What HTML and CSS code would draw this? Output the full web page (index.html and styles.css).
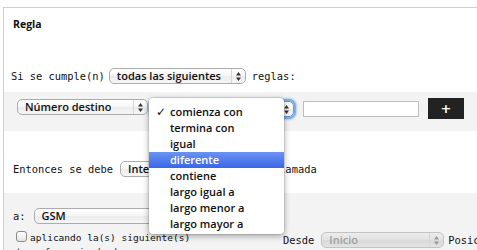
FILE: index.html
```html
<!DOCTYPE html>
<html>
<head>
<meta charset="utf-8">
<link rel="stylesheet" href="styles.css">
</head>
<body>
<div class="panel">
  <div class="title">Regla</div>

  <div class="row cond-row">
    <span class="mono">Si se cumple(n)</span>
    <div class="sel sel-todas"><span class="txt">todas las siguientes</span><span class="arr"><svg width="5" height="9" viewBox="0 0 5 9"><path d="M2.5 0L5 3.5H0Z M2.5 9L5 5.5H0Z" fill="#333"/></svg></span></div>
    <span class="mono">reglas:</span>
  </div>

  <div class="band rule-row">
    <div class="sel sel-campo"><span class="txt">Número destino</span><span class="arr"><svg width="5" height="9" viewBox="0 0 5 9"><path d="M2.5 0L5 3.5H0Z M2.5 9L5 5.5H0Z" fill="#333"/></svg></span></div>
    <div class="sel sel-op focus"><span class="txt">comienza con</span><span class="arr"><svg width="5" height="9" viewBox="0 0 5 9"><path d="M2.5 0L5 3.5H0Z M2.5 9L5 5.5H0Z" fill="#333"/></svg></span></div>
    <input class="valor" type="text">
    <button class="add">+</button>
  </div>

  <div class="row action-row">
    <span class="mono">Entonces se debe</span>
    <div class="sel sel-accion"><span class="txt">Interceptar</span><span class="arr"><svg width="5" height="9" viewBox="0 0 5 9"><path d="M2.5 0L5 3.5H0Z M2.5 9L5 5.5H0Z" fill="#333"/></svg></span></div>
    <span class="mono">la llamada</span>
  </div>

  <div class="band target">
    <div class="row a-row">
      <span class="mono">a:</span>
      <div class="sel sel-gsm"><span class="txt">GSM</span><span class="arr"><svg width="5" height="9" viewBox="0 0 5 9"><path d="M2.5 0L5 3.5H0Z M2.5 9L5 5.5H0Z" fill="#333"/></svg></span></div>
    </div>
    <div class="trans-row">
      <div class="trans-left mono"><span class="chk"></span>aplicando la(s) siguiente(s) transformacion(es):</div>
      <div class="trans-right">
        <span class="mono">Desde</span>
        <div class="sel sel-inicio disabled"><span class="txt">Inicio</span><span class="arr"><svg width="5" height="9" viewBox="0 0 5 9"><path d="M2.5 0L5 3.5H0Z M2.5 9L5 5.5H0Z" fill="#999"/></svg></span></div>
        <span class="mono">Posición</span>
      </div>
    </div>
  </div>

  <ul class="menu">
    <li class="checked"><span class="check">✓</span>comienza con</li>
    <li>termina con</li>
    <li>igual</li>
    <li class="hl">diferente</li>
    <li>contiene</li>
    <li>largo igual a</li>
    <li>largo menor a</li>
    <li>largo mayor a</li>
  </ul>
</div>
</body>
</html>
```

FILE: styles.css
```css
html, body {
  margin: 0;
  padding: 0;
  background: #fff;
  overflow: hidden;
}
body {
  width: 477px;
  height: 250px;
}
.panel {
  position: relative;
  margin: 7px 0 0 3px;
  border-top: 1px solid #cfcfcf;
  border-left: 1px solid #cfcfcf;
  width: 520px;
  height: 300px;
  font-family: "Open Sans", "DejaVu Sans", sans-serif;
  color: #111;
}
.title {
  padding: 8px 0 0 9px;
  height: 16px;
  line-height: 16px;
  font-weight: 700;
  font-size: 10.5px;
}
.mono {
  font-family: "DejaVu Sans Mono", monospace;
  font-size: 10.4px;
  color: #111;
  white-space: nowrap;
}
.row {
  display: flex;
  align-items: center;
}
.cond-row {
  margin-top: 36px;
  height: 16px;
  padding-left: 7px;
  margin-bottom: 8px;
}
.band {
  background: #f3f3f3;
}
.rule-row {
  height: 39px;
  box-sizing: border-box;
  padding: 6px 0 0 13px;
  display: flex;
  align-items: flex-start;
}
.sel {
  display: flex;
  align-items: center;
  box-sizing: border-box;
  height: 16px;
  border: 1px solid #ababab;
  border-radius: 5px;
  background: linear-gradient(#ffffff, #f7f7f7 45%, #ececec 55%, #f6f6f6);
  padding-left: 7px;
  font-size: 11px;
  font-weight: 600;
  color: #111;
}
.sel .txt {
  white-space: nowrap;
  overflow: hidden;
  line-height: 14px;
}
.sel .arr {
  margin-left: auto;
  width: 13px;
  height: 100%;
  border-left: 1px solid #d6d6d6;
  display: flex;
  align-items: center;
  justify-content: center;
  flex: none;
}
.sel-todas {
  width: 137px;
  margin: 0 6px 0 4px;
}
.sel-campo {
  width: 131px;
  margin-top: 1px;
}
.sel-op {
  width: 143px;
  margin: 3px 0 0 3px;
}
.focus {
  box-shadow: 0 0 0 2px #82ace4, 0 0 2px 3px #b3cdf0;
  border-color: #6d95cf;
}
.valor {
  margin: 3px 0 0 9px;
  width: 116px;
  height: 16px;
  box-sizing: border-box;
  border: 1px solid #bdbdbd;
  background: #fff;
  padding: 0;
}
.add {
  margin: 0 0 0 9px;
  width: 36px;
  height: 21px;
  border: none;
  background: #222;
  color: #fff;
  font: 700 13px "DejaVu Sans", sans-serif;
  padding: 0;
  line-height: 21px;
}
.action-row {
  margin-top: 30px;
  height: 15px;
  padding-left: 9px;
  margin-bottom: 17px;
}
.sel-accion {
  width: 130px;
  margin: 0 4px 0 7px;
}
.target {
  padding-top: 15px;
  height: 80px;
}
.a-row {
  height: 15px;
  padding-left: 9px;
}
.sel-gsm {
  width: 150px;
  margin-left: 8px;
}
.trans-row {
  display: flex;
  align-items: flex-start;
  margin-top: 8px;
}
.trans-left {
  width: 262px;
  padding-left: 12px;
  white-space: normal;
  line-height: 14px;
  font-size: 9.5px;
}
.chk {
  display: inline-block;
  width: 9px;
  height: 9px;
  border: 1px solid #8a8a8a;
  border-radius: 3px;
  background: linear-gradient(#fdfdfd, #e6e6e6);
  vertical-align: -1px;
  margin-right: 3px;
}
.trans-right {
  display: flex;
  align-items: center;
  margin: 1px 0 0 5px;
}
.sel-inicio {
  width: 123px;
  margin: 0 4px 0 7px;
}
.disabled {
  background: linear-gradient(#ececec, #e2e2e2 50%, #d9d9d9 55%, #e3e3e3);
  border-color: #c3c3c3;
  color: #a0a0a0;
}
.menu {
  position: absolute;
  left: 145px;
  top: 90px;
  width: 135px;
  margin: 0;
  padding: 6px 0 2px 0;
  list-style: none;
  background: #fff;
  border-radius: 4px;
  box-shadow: 0 2px 6px rgba(0,0,0,0.35), 0 0 0 1px rgba(0,0,0,0.08);
  font-size: 11px;
  font-weight: 600;
}
.menu li {
  position: relative;
  height: 16px;
  line-height: 16px;
  padding-left: 21px;
  color: #111;
  white-space: nowrap;
}
.menu .check {
  position: absolute;
  left: 7px;
  top: 0;
  font-family: "DejaVu Sans", sans-serif;
  font-size: 12px;
  font-weight: 700;
}
.menu li.hl {
  background: linear-gradient(#6b93f2, #3867e6);
  color: #fff;
}
```
